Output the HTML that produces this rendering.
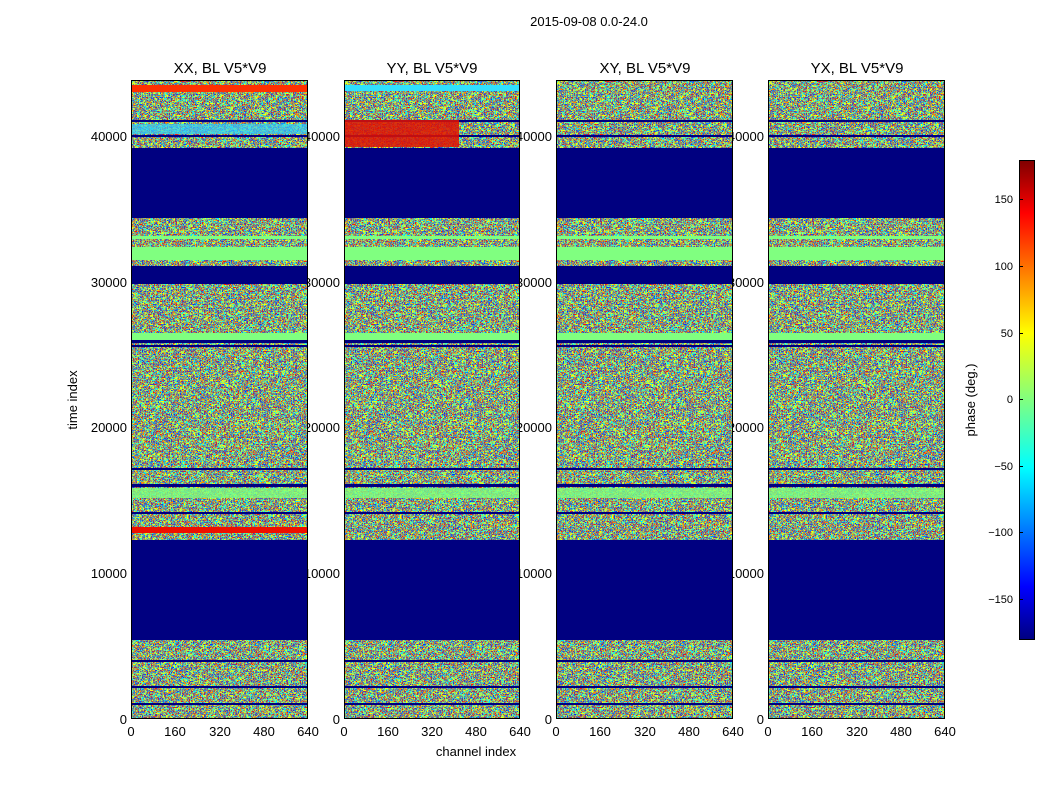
<!DOCTYPE html>
<html><head><meta charset="utf-8"><style>
html,body{margin:0;padding:0;background:#fff;}
svg{display:block;font-family:"Liberation Sans",sans-serif;}
</style></head><body>
<svg width="1050" height="800" viewBox="0 0 1050 800" xmlns="http://www.w3.org/2000/svg">
<defs>
<filter id="nz" x="0" y="0" width="100%" height="100%" color-interpolation-filters="sRGB">
<feTurbulence type="fractalNoise" baseFrequency="0.45 0.7" numOctaves="1" seed="3"/>
<feColorMatrix type="matrix" values="1 0 0 0 0  1 0 0 0 0  1 0 0 0 0  0 0 0 0 1"/>
<feComponentTransfer>
<feFuncR type="discrete" tableValues="1 0 1 0 1 0 1 0 1 0.5 0 1"/>
<feFuncG type="discrete" tableValues="0 1 1 0.3 0.1 0.9 1 0.2 0.5 1 0 0"/>
<feFuncB type="discrete" tableValues="0 1 0 1 0 1 0 1 0 0.5 1 0"/>
</feComponentTransfer>
</filter>
<linearGradient id="jet" x1="0" y1="1" x2="0" y2="0">
<stop offset="0" stop-color="#000080"/><stop offset="0.11" stop-color="#0000ff"/>
<stop offset="0.36" stop-color="#00ffff"/><stop offset="0.5" stop-color="#80ff80"/>
<stop offset="0.64" stop-color="#ffff00"/><stop offset="0.89" stop-color="#ff0000"/>
<stop offset="1" stop-color="#800000"/>
</linearGradient>
<clipPath id="cp"><rect x="0" y="80" width="176" height="639"/></clipPath>
<g id="bands">
<rect x="0" y="148" width="177" height="70" fill="#000080"/>
<rect x="0" y="540" width="177" height="100" fill="#000080"/>
<rect x="0" y="247" width="177" height="13" fill="#80ff80"/>
<rect x="0" y="266" width="177" height="16" fill="#000080"/>
<rect x="0" y="333" width="177" height="9" fill="#80ff80"/>
<rect x="0" y="236" width="177" height="3" fill="#80ff80"/>
<rect x="0" y="488" width="177" height="10" fill="#80ff80" opacity="0.8"/>
<rect x="0" y="120" width="177" height="2" fill="#000080"/>
<rect x="0" y="135" width="177" height="2" fill="#000080"/>
<rect x="0" y="282" width="177" height="2" fill="#000080"/>
<rect x="0" y="340" width="177" height="3" fill="#000080"/>
<rect x="0" y="345" width="177" height="2" fill="#000080"/>
<rect x="0" y="468" width="177" height="2" fill="#000080"/>
<rect x="0" y="484" width="177" height="3" fill="#000080"/>
<rect x="0" y="512" width="177" height="2" fill="#000080"/>
<rect x="0" y="686" width="177" height="2" fill="#000080"/>
<rect x="0" y="703" width="177" height="2" fill="#000080"/>
<rect x="0" y="660" width="177" height="2" fill="#000080"/>
</g>
</defs>

<text x="589" y="26" font-size="13" text-anchor="middle">2015-09-08 0.0-24.0</text>

<g font-size="13" text-anchor="end">
<text x="127" y="141">40000</text><text x="127" y="287">30000</text><text x="127" y="432">20000</text><text x="127" y="578">10000</text><text x="127" y="724">0</text>
<text x="340" y="141">40000</text><text x="340" y="287">30000</text><text x="340" y="432">20000</text><text x="340" y="578">10000</text><text x="340" y="724">0</text>
<text x="552" y="141">40000</text><text x="552" y="287">30000</text><text x="552" y="432">20000</text><text x="552" y="578">10000</text><text x="552" y="724">0</text>
<text x="764" y="141">40000</text><text x="764" y="287">30000</text><text x="764" y="432">20000</text><text x="764" y="578">10000</text><text x="764" y="724">0</text>
</g>

<g transform="translate(131,0)">
<rect x="0" y="80" width="177" height="639" filter="url(#nz)"/>
<use href="#bands"/>
<rect x="0" y="85" width="177" height="7" fill="#ff3000"/>
<rect x="0" y="527" width="177" height="6" fill="#ee1000"/>
<rect x="0" y="124" width="177" height="10" fill="#30d0ff" opacity="0.7"/>
<rect x="0.5" y="80.5" width="176" height="638" fill="none" stroke="#000"/>
</g>
<g transform="translate(344,0)">
<rect x="0" y="80" width="176" height="639" filter="url(#nz)"/>
<g clip-path="url(#cp)"><use href="#bands"/></g>
<rect x="0" y="85" width="176" height="6" fill="#30e0ff"/>
<rect x="0" y="120" width="115" height="27" fill="#e01000" opacity="0.85"/>
<rect x="0.5" y="80.5" width="175" height="638" fill="none" stroke="#000"/>
</g>
<g transform="translate(556,0)">
<rect x="0" y="80" width="177" height="639" filter="url(#nz)"/>
<use href="#bands"/>
<rect x="0.5" y="80.5" width="176" height="638" fill="none" stroke="#000"/>
</g>
<g transform="translate(768,0)">
<rect x="0" y="80" width="177" height="639" filter="url(#nz)"/>
<use href="#bands"/>
<rect x="0.5" y="80.5" width="176" height="638" fill="none" stroke="#000"/>
</g>

<g font-size="15" text-anchor="middle">
<text x="220" y="73">XX, BL V5*V9</text>
<text x="432" y="73">YY, BL V5*V9</text>
<text x="645" y="73">XY, BL V5*V9</text>
<text x="857" y="73">YX, BL V5*V9</text>
</g>

<g font-size="13" text-anchor="middle">
<text x="131" y="736">0</text><text x="175" y="736">160</text><text x="220" y="736">320</text><text x="264" y="736">480</text><text x="308" y="736">640</text>
<text x="344" y="736">0</text><text x="388" y="736">160</text><text x="432" y="736">320</text><text x="476" y="736">480</text><text x="520" y="736">640</text>
<text x="556" y="736">0</text><text x="600" y="736">160</text><text x="645" y="736">320</text><text x="689" y="736">480</text><text x="733" y="736">640</text>
<text x="768" y="736">0</text><text x="812" y="736">160</text><text x="857" y="736">320</text><text x="901" y="736">480</text><text x="945" y="736">640</text>
</g>

<text x="476" y="756" font-size="13" text-anchor="middle">channel index</text>
<text x="0" y="0" font-size="13" text-anchor="middle" transform="translate(77,400) rotate(-90)">time index</text>

<rect x="1019.5" y="160.5" width="15" height="479" fill="url(#jet)" stroke="#000"/>
<g font-size="11" text-anchor="end">
<text x="1013" y="203">150</text><text x="1013" y="270">100</text><text x="1013" y="337">50</text><text x="1013" y="403">0</text>
<text x="1013" y="470">−50</text><text x="1013" y="536">−100</text><text x="1013" y="603">−150</text>
</g>
<g stroke="#000">
<line x1="1019" y1="199.5" x2="1023" y2="199.5"/><line x1="1019" y1="266.5" x2="1023" y2="266.5"/><line x1="1019" y1="333.5" x2="1023" y2="333.5"/><line x1="1019" y1="399.5" x2="1023" y2="399.5"/><line x1="1019" y1="466.5" x2="1023" y2="466.5"/><line x1="1019" y1="532.5" x2="1023" y2="532.5"/><line x1="1019" y1="599.5" x2="1023" y2="599.5"/>
</g>
<text x="0" y="0" font-size="13" text-anchor="middle" transform="translate(975,400) rotate(-90)">phase (deg.)</text>
</svg>
</body></html>
